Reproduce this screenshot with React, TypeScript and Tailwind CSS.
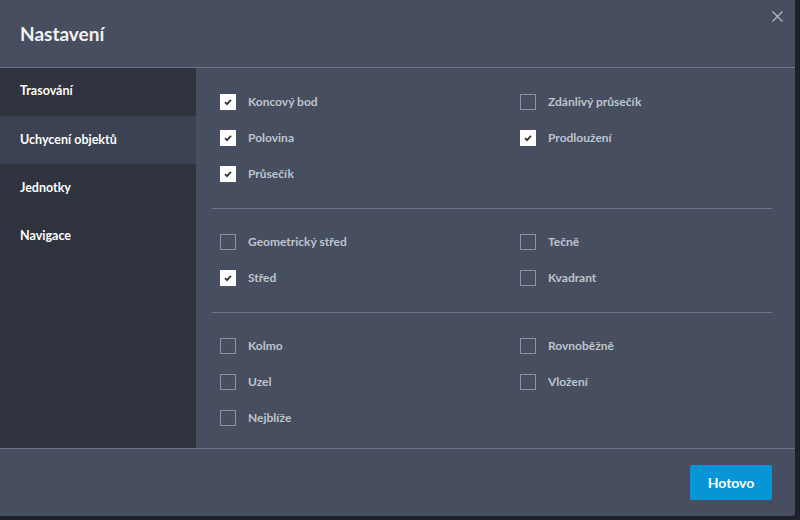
import React from 'react'

type Opt = { label: string; checked: boolean }

const groups: Opt[][] = [
  [
    { label: 'Koncový bod', checked: true },
    { label: 'Zdánlivý průsečík', checked: false },
    { label: 'Polovina', checked: true },
    { label: 'Prodloužení', checked: true },
    { label: 'Průsečík', checked: true },
  ],
  [
    { label: 'Geometrický střed', checked: false },
    { label: 'Tečně', checked: false },
    { label: 'Střed', checked: true },
    { label: 'Kvadrant', checked: false },
  ],
  [
    { label: 'Kolmo', checked: false },
    { label: 'Rovnoběžně', checked: false },
    { label: 'Uzel', checked: false },
    { label: 'Vložení', checked: false },
    { label: 'Nejblíže', checked: false },
  ],
]

const tabs = ['Trasování', 'Uchycení objektů', 'Jednotky', 'Navigace']

const Check = ({ opt }: { opt: Opt }) => (
  <label className="flex h-9 items-center gap-3">
    {opt.checked ? (
      <span className="flex h-4 w-4 items-center justify-center bg-white">
        <svg width="10" height="10" viewBox="0 0 10 10">
          <path d="M2 5.2 L4 7.2 L8 2.8" fill="none" stroke="#2f3542" strokeWidth="1.8" />
        </svg>
      </span>
    ) : (
      <span className="h-4 w-4 border border-[#8a94a6]" />
    )}
    <span className="text-[12px] font-bold text-[#bec4ce]">{opt.label}</span>
  </label>
)

const App = () => {
  return (
    <div className="h-[520px] w-[800px] bg-[#1e2128] font-['Lato',sans-serif]">
      <div className="flex h-[516px] w-[795px] flex-col overflow-hidden rounded-br-[3px] bg-[#464e5f]">
        <div className="relative flex h-[68px] shrink-0 items-center border-b border-[#6a778c] px-5 pt-[2px]">
          <h1 className="text-[19px] font-bold text-[#f2f3f5]">Nastavení</h1>
          <svg className="absolute right-[12px] top-[11px]" width="11" height="11" viewBox="0 0 11 11">
            <path d="M0.5 0.5 L10.5 10.5 M10.5 0.5 L0.5 10.5" stroke="#b7bfcc" strokeWidth="1.1" />
          </svg>
        </div>

        <div className="flex min-h-0 flex-1 overflow-hidden">
          <div className="w-[196px] bg-[#2e333e]">
            {tabs.map((t, i) => (
              <div
                key={t}
                className={`flex h-12 items-center px-5 text-[12.5px] font-bold text-white ${i === 1 ? 'bg-[#3b4251]' : ''} ${i === 0 ? 'pb-[2px]' : ''}`}
              >
                {t}
              </div>
            ))}
          </div>

          <div className="flex-1 pl-4 pr-[23px] pt-[16px]">
            {groups.map((g, i) => (
              <div key={i} className={i > 0 ? 'border-t border-[#67738a] pt-[15px]' : ''}>
                <div className="grid grid-cols-[300px_1fr] pb-[16px] pl-2">
                  {g.map((o) => (
                    <Check key={o.label} opt={o} />
                  ))}
                </div>
              </div>
            ))}
          </div>
        </div>

        <div className="flex h-[68px] shrink-0 items-center justify-end border-t border-[#67738a] px-[23px]">
          <button className="h-[35px] w-[82px] rounded-[2px] bg-[#0696d7] text-[14px] font-bold text-white">
            Hotovo
          </button>
        </div>
      </div>
    </div>
  )
}

export default App
